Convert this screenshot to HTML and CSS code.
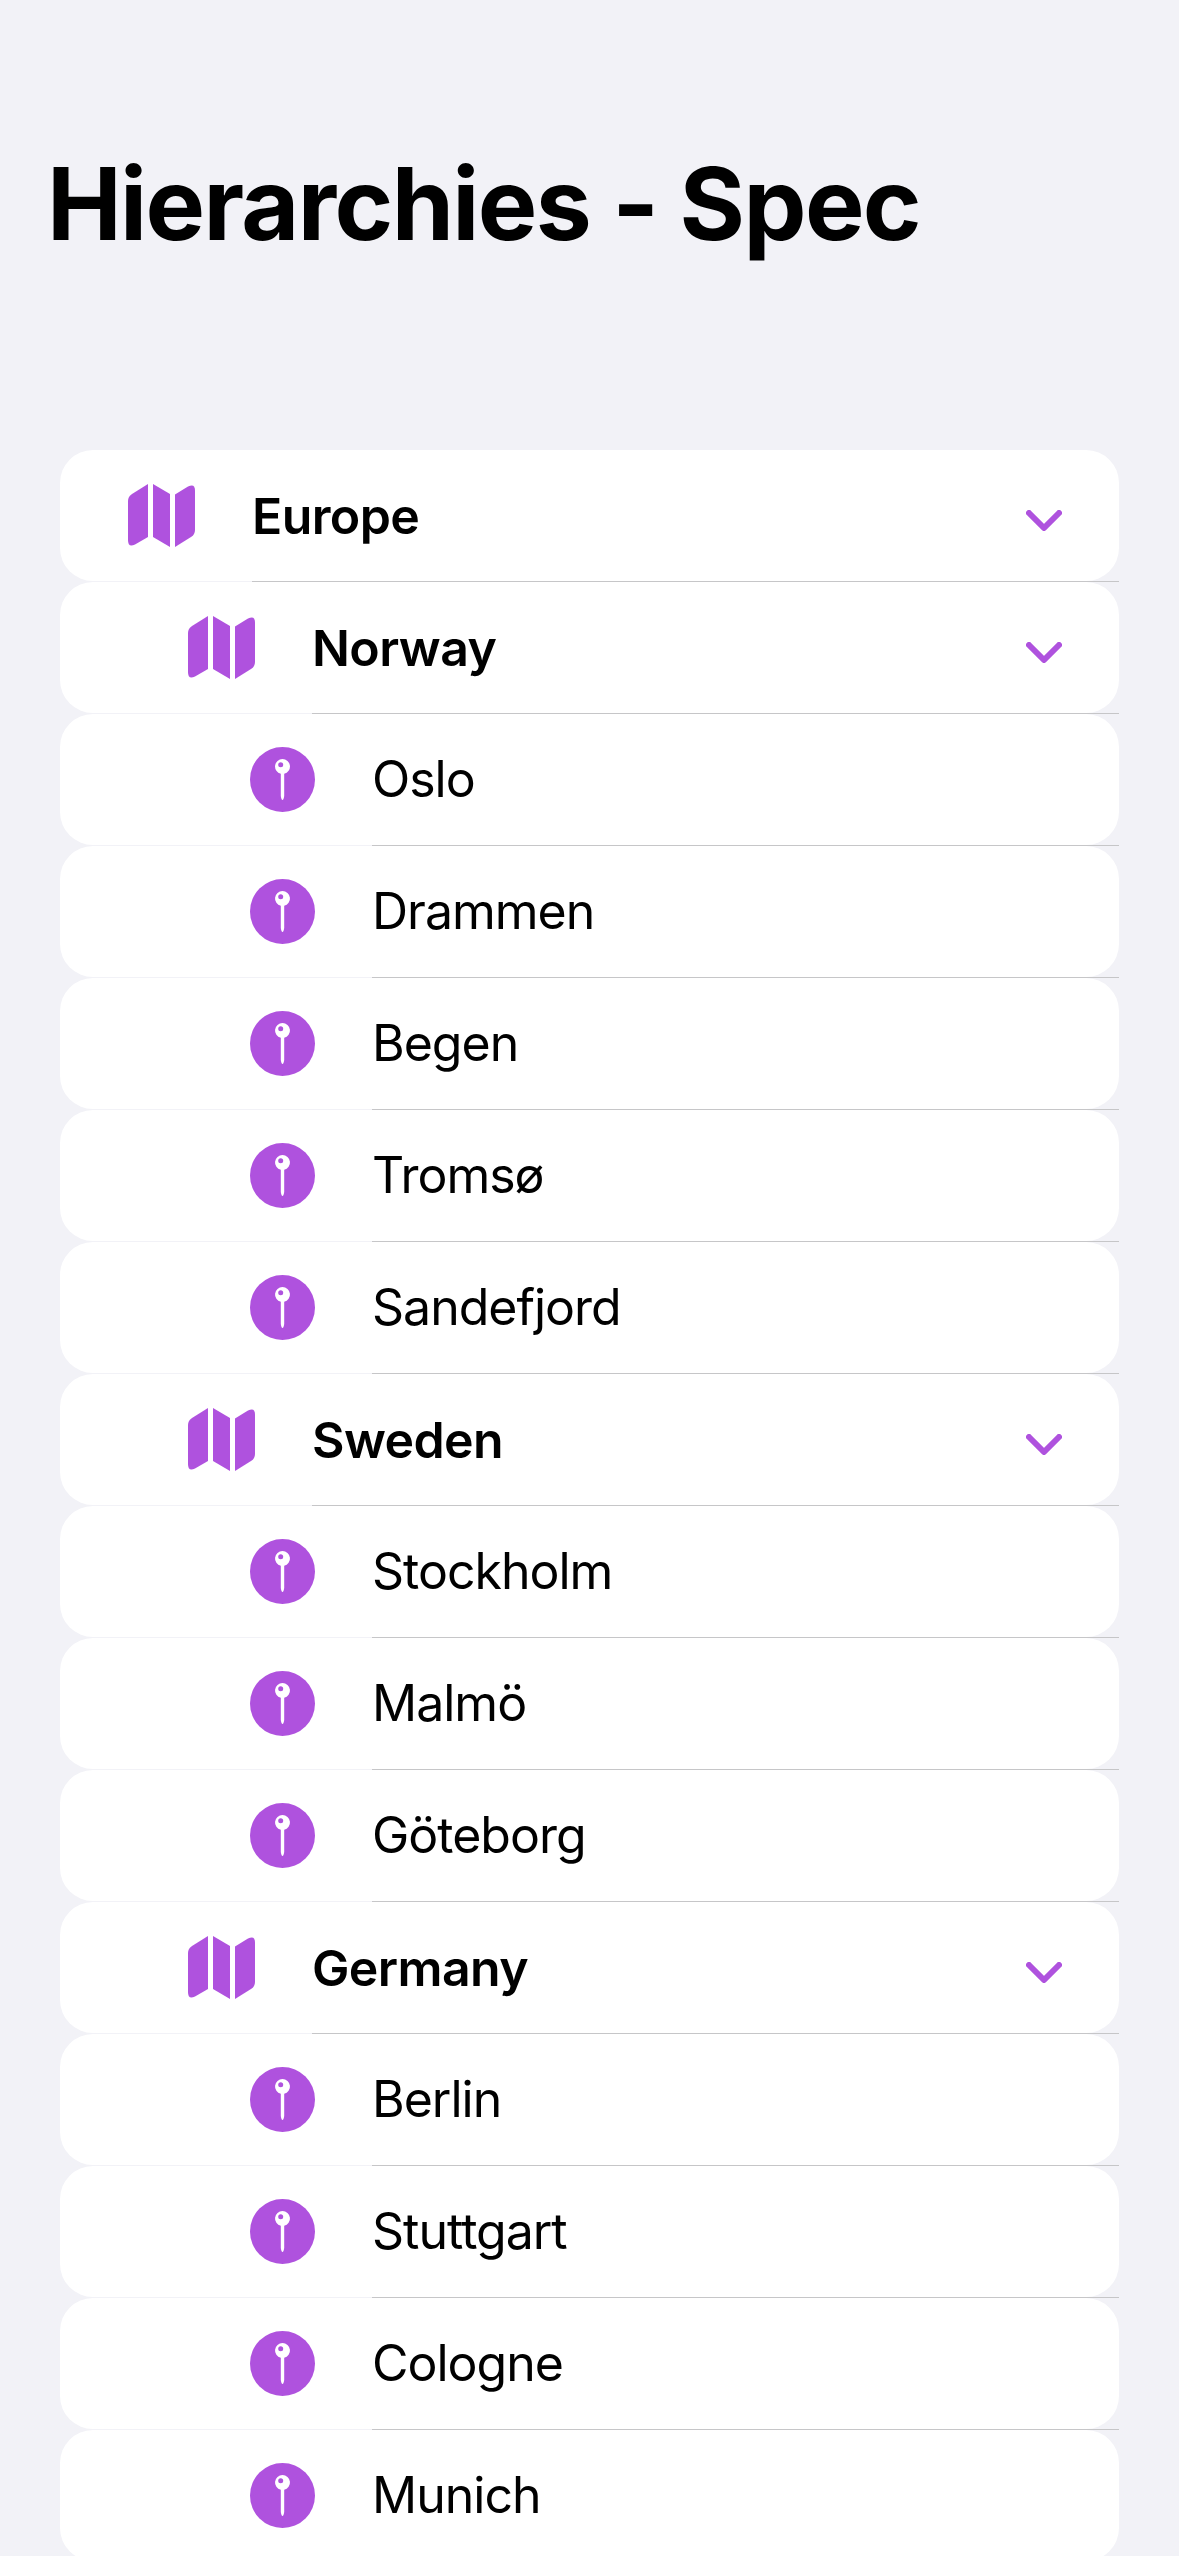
FILE: index.html
```html
<!DOCTYPE html>
<html lang="en">
<head>
<meta charset="utf-8">
<title>Hierarchies - Spec</title>
<link rel="stylesheet" href="styles.css">
</head>
<body>
<svg class="defs" width="0" height="0" aria-hidden="true">
  <symbol id="map" viewBox="0 0 67 63">
    <path d="M20 0V53L7 60.5Q0 64 0 56V17Q0 12.500 4 10Z"/>
    <path d="M25 0L42 10V63L25 53Z"/>
    <path d="M47 10.500L60 2.500Q67-1 67 6.500V46Q67 50.500 63 53L47 63Z"/>
  </symbol>
  <symbol id="pin" viewBox="0 0 65 65">
    <circle cx="32.500" cy="32.500" r="32.500" class="pin-bg"/>
    <path class="pin-fg" fill-rule="evenodd" d="M32.500 12A7.500 7.500 0 0 1 34.200 26.800V49Q33.600 53 32.500 53Q31.400 53 30.800 49V26.800A7.500 7.500 0 0 1 32.500 12ZM30.700 15.200A2.500 2.500 0 1 0 30.701 20.200A2.500 2.500 0 1 0 30.700 15.200Z"/>
  </symbol>
  <symbol id="chev" viewBox="0 0 36 21">
    <path d="M3 3L18 18L33 3"/>
  </symbol>
</svg>
<main class="page">
  <h1 class="title">Hierarchies - Spec</h1>
  <ul class="list">
    <li class="row level-0"><span class="slot"><svg class="map"><use href="#map"/></svg></span><div class="body"><span class="name strong">Europe</span><svg class="chev"><use href="#chev"/></svg></div></li>
    <li class="row level-1"><span class="slot"><svg class="map"><use href="#map"/></svg></span><div class="body"><span class="name strong">Norway</span><svg class="chev"><use href="#chev"/></svg></div></li>
    <li class="row level-2"><span class="slot"><svg class="pin"><use href="#pin"/></svg></span><div class="body"><span class="name">Oslo</span></div></li>
    <li class="row level-2"><span class="slot"><svg class="pin"><use href="#pin"/></svg></span><div class="body"><span class="name">Drammen</span></div></li>
    <li class="row level-2"><span class="slot"><svg class="pin"><use href="#pin"/></svg></span><div class="body"><span class="name">Begen</span></div></li>
    <li class="row level-2"><span class="slot"><svg class="pin"><use href="#pin"/></svg></span><div class="body"><span class="name">Tromsø</span></div></li>
    <li class="row level-2"><span class="slot"><svg class="pin"><use href="#pin"/></svg></span><div class="body"><span class="name">Sandefjord</span></div></li>
    <li class="row level-1"><span class="slot"><svg class="map"><use href="#map"/></svg></span><div class="body"><span class="name strong">Sweden</span><svg class="chev"><use href="#chev"/></svg></div></li>
    <li class="row level-2"><span class="slot"><svg class="pin"><use href="#pin"/></svg></span><div class="body"><span class="name">Stockholm</span></div></li>
    <li class="row level-2"><span class="slot"><svg class="pin"><use href="#pin"/></svg></span><div class="body"><span class="name">Malmö</span></div></li>
    <li class="row level-2"><span class="slot"><svg class="pin"><use href="#pin"/></svg></span><div class="body"><span class="name">Göteborg</span></div></li>
    <li class="row level-1"><span class="slot"><svg class="map"><use href="#map"/></svg></span><div class="body"><span class="name strong">Germany</span><svg class="chev"><use href="#chev"/></svg></div></li>
    <li class="row level-2"><span class="slot"><svg class="pin"><use href="#pin"/></svg></span><div class="body"><span class="name">Berlin</span></div></li>
    <li class="row level-2"><span class="slot"><svg class="pin"><use href="#pin"/></svg></span><div class="body"><span class="name">Stuttgart</span></div></li>
    <li class="row level-2"><span class="slot"><svg class="pin"><use href="#pin"/></svg></span><div class="body"><span class="name">Cologne</span></div></li>
    <li class="row level-2"><span class="slot"><svg class="pin"><use href="#pin"/></svg></span><div class="body"><span class="name">Munich</span></div></li>
  </ul>
</main>
</body>
</html>
```
FILE: styles.css
```css
* { box-sizing: border-box; }
html, body { margin: 0; padding: 0; height: 2556px; overflow: hidden; background: #f2f2f7; }
body { font-family: Inter, "Liberation Sans", sans-serif; color: #000; }
.defs { display: block; width: 0; height: 0; }
.page { display: flex; flex-direction: column; height: 2556px; overflow: hidden; padding: 0 60px; }
.title { margin: 143px 0 185px -13px; font-size: 100px; line-height: 122px; font-weight: 700; letter-spacing: -1.6px; white-space: nowrap; }
.list { list-style: none; margin: 0; padding: 0; display: flex; flex-direction: column; gap: 1px; }
.row { display: flex; height: 131px; flex: none; background: #fff; border-radius: 33px; }
.level-0 { padding-left: 68px; }
.level-1 { padding-left: 128px; }
.level-2 { padding-left: 188px; }
.slot { flex: none; width: 67px; margin-right: 57px; display: flex; align-items: center; justify-content: center; }
.map { width: 67px; height: 63px; fill: #af52de; }
.pin { width: 65px; height: 65px; margin-left: 1px; }
.pin-bg { fill: #af52de; }
.pin-fg { fill: #fff; }
.body { flex: 1; display: flex; align-items: center; justify-content: space-between; margin-bottom: -1px; padding: 0 57px 2px 0; border-bottom: 1px solid #c6c6c8; min-width: 0; }
.name { font-size: 50px; line-height: 60px; font-weight: 400; letter-spacing: -1px; }
.strong { font-weight: 600; letter-spacing: -0.6px; margin-top: 2px; }
.chev { width: 36px; height: 21px; margin-top: 11px; fill: none; stroke: #af52de; stroke-width: 6px; stroke-linecap: round; stroke-linejoin: round; }
```
